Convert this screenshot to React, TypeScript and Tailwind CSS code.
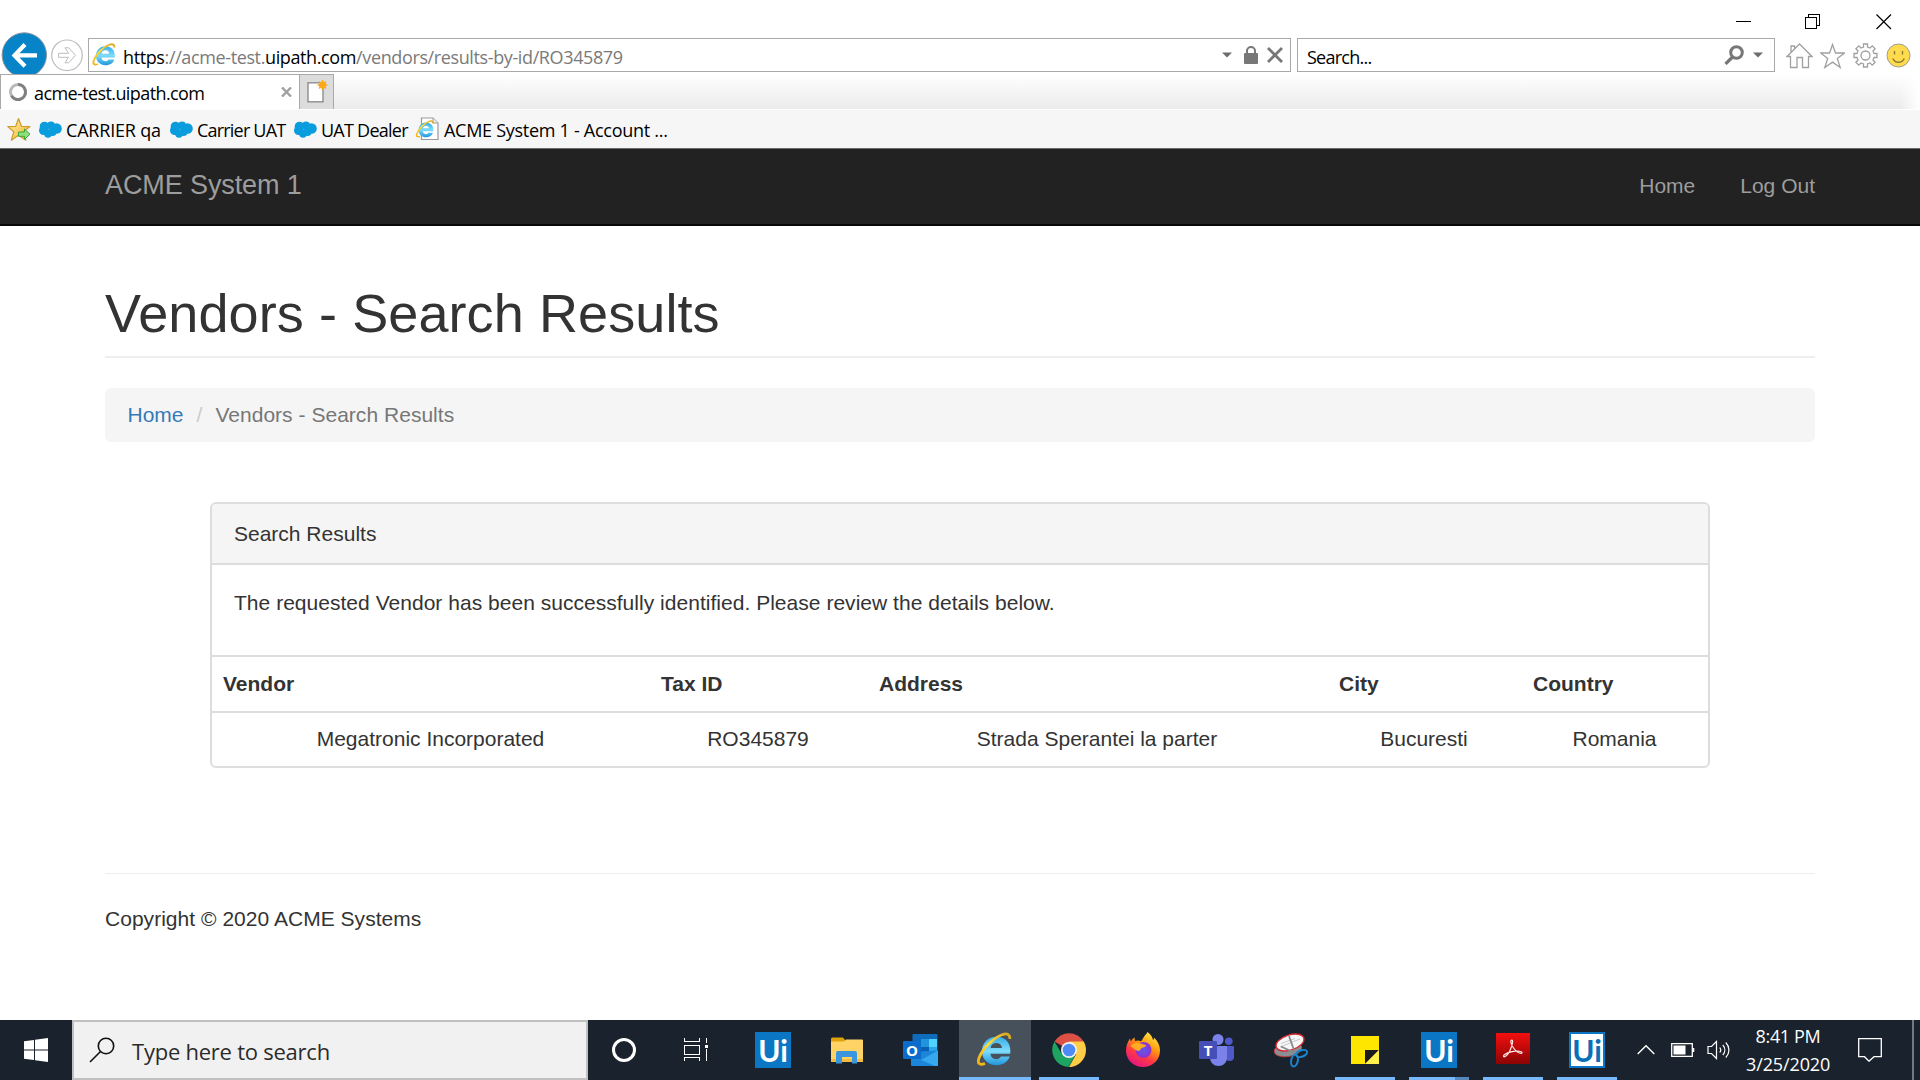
import type { ReactNode } from "react";

/* ---------- browser icons ---------- */

function IEGlyph({ id }: { id: string }) {
  return (
    <>
      <defs>
        <linearGradient id={`${id}-b`} x1="0" y1="0" x2="0" y2="1">
          <stop offset="0" stopColor="#35aeea" />
          <stop offset="0.5" stopColor="#7fdcfb" />
          <stop offset="1" stopColor="#1f97dc" />
        </linearGradient>
        <linearGradient id={`${id}-g`} x1="1" y1="0" x2="0" y2="1">
          <stop offset="0" stopColor="#d9a521" />
          <stop offset="0.5" stopColor="#ffdb3a" />
          <stop offset="1" stopColor="#f2b20f" />
        </linearGradient>
      </defs>
      <path
        d="M35 22.8H15.2c.3 3.500 2.500 5.400 5.700 5.400 2.300 0 4-.9 4.900-2.600H34.500C32.800 31 28 34.200 21.500 34.200 13 34.200 6.800 28.500 6.800 20.200S13 5.800 21.200 5.800C29.800 5.800 35.200 11.500 35.200 20zM15.400 17h11.400c-.4-3.200-2.500-5-5.600-5s-5.300 1.800-5.800 5z"
        fill={`url(#${id}-b)`}
      />
      <path
        d="M34.600 7.800C35 3.500 32 2 27.500 3.500 19 6.300 8 16.500 4 26.500c-2.200 5.500-.3 8.300 5.800 6"
        fill="none"
        stroke={`url(#${id}-g)`}
        strokeWidth="2.800"
      />
    </>
  );
}

function SmallIE({ id }: { id: string }) {
  return (
    <svg className="h-[24px] w-[24px] shrink-0" viewBox="1 1 36 36">
      <IEGlyph id={id} />
    </svg>
  );
}

function BackForward() {
  return (
    <svg className="h-[44px] w-[88px] shrink-0" viewBox="0 0 88 44">
      <circle cx="24.300" cy="25" r="22.200" fill="#0784c8" stroke="#8d9499" strokeWidth="1" />
      <path d="M37 25.400H16M25 14.500L14.500 25.400L25 36.300" fill="none" stroke="#fff" strokeWidth="4.200" />
      <circle cx="67" cy="25.300" r="15.300" fill="#fff" stroke="#bdbdbd" strokeWidth="1.200" />
      <path d="M58.500 23.300h10l-3.500-5.500h3.700l6.800 7.500-6.800 7.500H65l3.500-5.500h-10z" fill="none" stroke="#bdbdbd" strokeWidth="1" />
    </svg>
  );
}

function Caret() {
  return (
    <svg className="h-[6px] w-[10px] shrink-0" viewBox="0 0 10 6">
      <path d="M0 .5h10L5 5.500z" fill="#6d6d6d" />
    </svg>
  );
}

function LockIcon() {
  return (
    <svg className="h-[18px] w-[14px] shrink-0" viewBox="0 0 14 18">
      <rect x="0" y="7" width="14" height="11" rx="1" fill="#777" />
      <path d="M3 8V5a4 4 0 0 1 8 0v3" fill="none" stroke="#777" strokeWidth="2" />
    </svg>
  );
}

function StopIcon() {
  return (
    <svg className="h-[16px] w-[16px] shrink-0" viewBox="0 0 16 16">
      <path d="M1 1L15 15M15 1L1 15" stroke="#777" strokeWidth="2.800" />
    </svg>
  );
}

function ToolbarSearchIcon() {
  return (
    <svg className="h-[20px] w-[20px] shrink-0" viewBox="0 0 20 20">
      <circle cx="12.500" cy="7.500" r="5.800" fill="none" stroke="#777" strokeWidth="3" />
      <path d="M8.500 12L1.500 19" stroke="#777" strokeWidth="3.200" />
    </svg>
  );
}

function ToolbarIcons() {
  return (
    <div className="mt-[13px] ml-[11px] flex shrink-0 gap-[8px]">
      <svg className="h-[26px] w-[27px]" viewBox="0 0 27 26" fill="none" stroke="#a0a0a0" strokeWidth="1.300">
        <path d="M1 13.500L13.500 1L26 13.500H22.500V24.500H16.500V14.500H11V24.500H4.500V13.500zM5 9V3h3.500v2.500" />
      </svg>
      <svg className="-ml-px h-[26px] w-[25px]" viewBox="0 0 25 26" fill="none" stroke="#a0a0a0" strokeWidth="1.300">
        <path d="M12.500 1.500l3 8.500h9l-7.200 5.500 2.900 9-7.700-5.400-7.700 5.400 2.900-9L.6 10h9z" />
      </svg>
      <svg className="h-[26px] w-[25px]" viewBox="0 0 25 26" fill="none" stroke="#a0a0a0" strokeWidth="1.300">
        <path d="M10.500 1h4v3l2.500 1 2.200-2.200 2.900 2.900L20 8l1 2.500h3v4h-3L20 17l2.100 2.300-2.900 2.900L17 20l-2.500 1v3h-4v-3L8 20l-2.200 2.200-2.900-2.900L5 17l-1-2.500H1v-4h3L5 8 2.900 5.700l2.900-2.900L8 5l2.500-1z" />
        <circle cx="12.500" cy="12.500" r="4.500" />
      </svg>
      <svg className="h-[26px] w-[25px]" viewBox="0 0 25 26">
        <circle cx="12.500" cy="12.500" r="11.500" fill="#ffdb4d" stroke="#9d9d9d" strokeWidth="1" />
        <path d="M8.500 8v3.500M16.500 8v3.500" stroke="#8a7a30" strokeWidth="1.400" />
        <path d="M6.800 15.500c2.500 5 9 5 11.500 0" fill="none" stroke="#8a7a30" strokeWidth="1.500" />
      </svg>
    </div>
  );
}

function WindowControls() {
  return (
    <div className="flex h-[30px] justify-end gap-[54px] pt-[14px] pr-[28px]">
      <svg className="h-[16px] w-[16px]" viewBox="0 0 16 16" shapeRendering="crispEdges">
        <path d="M0 7.500h15" stroke="#000" />
      </svg>
      <svg className="mr-px -ml-px h-[16px] w-[16px]" viewBox="0 0 16 16" fill="none" stroke="#000" shapeRendering="crispEdges">
        <path d="M.5 3.500h11v11H.5zM3.500 3V.5h11v11H12" />
      </svg>
      <svg className="h-[16px] w-[16px]" viewBox="0 0 16 16">
        <path d="M.5 .5l14.500 14.500M15 .5L.5 15" stroke="#000" strokeWidth="1.200" />
      </svg>
    </div>
  );
}

function Cloud() {
  return (
    <svg className="h-[17px] w-[23px] shrink-0" viewBox="0 0 23 17">
      <g fill="#0a9ddd">
        <circle cx="5.500" cy="5.500" r="4.800" />
        <circle cx="4.500" cy="9.500" r="4.500" />
        <circle cx="12" cy="4.500" r="4" />
        <circle cx="17.500" cy="7.500" r="5.300" />
        <circle cx="9" cy="12.500" r="4.200" />
        <circle cx="13.500" cy="11" r="4" />
      </g>
    </svg>
  );
}

function FavoriteStar() {
  return (
    <svg className="h-[25px] w-[25px] shrink-0" viewBox="0 0 25 25">
      <defs>
        <linearGradient id="favstar" x1="0" y1="0" x2="1" y2="1">
          <stop offset="0" stopColor="#fff1a8" />
          <stop offset="1" stopColor="#f3b32b" />
        </linearGradient>
      </defs>
      <path
        d="M11.500 1.500l3 7.800 8.500.3-6.700 5.200 2.600 8.400-7.400-4.900-7.200 4.900 2.500-8.400L.8 9.600l8-.3z"
        fill="url(#favstar)"
        stroke="#cf9a2c"
        strokeWidth="1.200"
        strokeLinejoin="round"
      />
      <path d="M11.500 15h6v-3l5.500 5.200-5.500 5.200v-3.100h-6z" fill="#8fe07a" stroke="#3aa83c" strokeWidth="1" />
    </svg>
  );
}

function PageIE() {
  return (
    <svg className="h-[24px] w-[24px] shrink-0" viewBox="0 0 24 24">
      <path d="M5.500 1h11.500l5 5v16.500h-16.500z" fill="#fff" stroke="#9a9a9a" strokeWidth="1.200" />
      <path d="M17 1v5h5" fill="#eee" stroke="#9a9a9a" />
      <g transform="translate(-1 2.500) scale(.52)">
        <IEGlyph id="pg" />
      </g>
    </svg>
  );
}

/* ---------- browser chrome ---------- */

function AddressRow() {
  return (
    <div className="flex h-[44px] overflow-hidden">
      <BackForward />
      <div className="mt-[8px] flex h-[34px] w-[1203px] shrink-0 items-center border border-[#a9a9a9] bg-white pl-[3px]">
        <SmallIE id="addr" />
        <span className="mt-[3px] ml-[7px] flex-1 text-[18px] leading-[30px] tracking-[-0.38px] whitespace-nowrap text-[#7a7a7a]">
          <span className="text-black">https</span>://acme-test.<span className="text-black">uipath.com</span>
          /vendors/results-by-id/RO345879
        </span>
        <div className="flex items-center gap-[10px] pr-[7px]">
          <Caret />
          <div className="ml-[2px] flex items-center gap-[9px]">
            <LockIcon />
            <StopIcon />
          </div>
        </div>
      </div>
      <div className="mt-[8px] ml-[6px] flex h-[34px] w-[478px] shrink-0 items-center border border-[#a9a9a9] bg-white pr-[11px] pl-[9px]">
        <span className="mt-[3px] flex-1 text-[18px] leading-[30px] tracking-[-0.75px] text-black">Search...</span>
        <div className="flex items-center gap-[9px]">
          <ToolbarSearchIcon />
          <Caret />
        </div>
      </div>
      <ToolbarIcons />
    </div>
  );
}

function TabRow() {
  return (
    <div className="flex h-[35px] bg-gradient-to-b from-white to-[#ebebeb]">
      <div className="flex w-[300px] items-center border-t border-r border-l border-[#a9a9a9] bg-white pr-[7px] pl-[7px]">
        <svg className="h-[20px] w-[20px] shrink-0" viewBox="0 0 20 20">
          <circle cx="10" cy="10" r="7.500" fill="none" stroke="#b9b9b9" strokeWidth="3" />
          <path d="M10 2.500a7.500 7.500 0 1 1-6.500 11.200" fill="none" stroke="#808080" strokeWidth="3" />
        </svg>
        <span className="mt-[2px] ml-[6px] flex-1 text-[18px] leading-[32px] tracking-[-0.6px] text-black">
          acme-test.uipath.com
        </span>
        <svg className="h-[10px] w-[11px] shrink-0" viewBox="0 0 11 10">
          <path d="M1 .5l9 9M10 .5l-9 9" stroke="#a0a0a0" strokeWidth="2.400" />
        </svg>
      </div>
      <div className="flex w-[34px] justify-center border-t border-r border-[#a9a9a9] bg-[#dcdcdc]">
        <svg className="mt-[5px] h-[24px] w-[22px]" viewBox="0 0 22 24">
          <rect x="2" y="2.800" width="15" height="19" fill="#fff" stroke="#8d8d8d" strokeWidth="1.400" />
          <circle cx="16.500" cy="5" r="3.600" fill="#fba919" />
          <path d="M16.500 0v10M11.500 5h10M13 1.500l7 7M20 1.500l-7 7" stroke="#fba919" strokeWidth="1.300" />
        </svg>
      </div>
      <div className="flex-1" />
      <div className="w-[20px] bg-gradient-to-r from-transparent to-white" />
    </div>
  );
}

function FavoritesBar() {
  return (
    <div className="mt-px flex h-[39px] items-center border-b border-[#6b6b6b] bg-[#f6f6f6] pl-[7px] text-[18px] leading-[36px] whitespace-nowrap text-black">
      <FavoriteStar />
      <div className="ml-[7px] flex w-[131px] items-center gap-[4px]">
        <Cloud />
        <span className="mt-[2px] tracking-[-0.2px]">CARRIER qa</span>
      </div>
      <div className="flex w-[124px] items-center gap-[4px]">
        <Cloud />
        <span className="mt-[2px] tracking-[-0.8px]">Carrier UAT</span>
      </div>
      <div className="flex w-[122px] items-center gap-[4px]">
        <Cloud />
        <span className="mt-[2px] tracking-[-0.75px]">UAT Dealer</span>
      </div>
      <div className="flex items-center gap-[4px]">
        <PageIE />
        <span className="mt-[2px] tracking-[-0.28px]">ACME System 1 - Account ...</span>
      </div>
    </div>
  );
}

/* ---------- page ---------- */

function Page() {
  return (
    <main className="h-[871px] overflow-hidden bg-white font-['Liberation_Sans',Arial,sans-serif] text-[21px] leading-[30px] text-[#333]">
      <nav className="flex h-[77px] items-center justify-between border-b-2 border-[#080808] bg-[#222] px-[105px] pb-[2px] text-[#9d9d9d]">
        <span className="mb-px text-[27px] tracking-[-0.1px]">ACME System 1</span>
        <div className="flex gap-[45px]">
          <span>Home</span>
          <span>Log Out</span>
        </div>
      </nav>
      <div className="mx-auto w-[1710px]">
        <h1 className="mt-[57px] border-b-2 border-[#eee] pb-[13px] text-[54px] leading-[60px] tracking-[0.1px]">
          Vendors - Search Results
        </h1>
        <div className="mt-[30px] flex h-[54px] items-center rounded-[6px] bg-[#f5f5f5] px-[22.5px]">
          <span className="text-[#337ab7]">Home</span>
          <span className="mx-[13px] text-[#ccc]">/</span>
          <span className="tracking-[0.03px] text-[#777]">Vendors - Search Results</span>
        </div>
        <section className="mx-auto mt-[60px] w-[1500px] overflow-hidden rounded-[6px] border-2 border-[#ddd]">
          <div className="flex h-[61px] items-center border-b-2 border-[#ddd] bg-[#f5f5f5] px-[22px]">
            Search Results
          </div>
          <div className="h-[90px] px-[22px] pt-[23px] tracking-[0.027px]">
            The requested Vendor has been successfully identified. Please review the details below.
          </div>
          <table className="w-full table-fixed border-collapse border-t-2 border-[#ddd]">
            <colgroup>
              <col className="w-[437px]" />
              <col className="w-[218px]" />
              <col className="w-[460px]" />
              <col className="w-[194px]" />
              <col />
            </colgroup>
            <thead>
              <tr className="h-[56px] border-b-2 border-[#ddd]">
                {["Vendor", "Tax ID", "Address", "City", "Country"].map((h) => (
                  <th key={h} className="px-[12px] text-left font-bold first:pl-[11px]">
                    {h}
                  </th>
                ))}
              </tr>
            </thead>
            <tbody>
              <tr className="h-[54px] text-center">
                {["Megatronic Incorporated", "RO345879", "Strada Sperantei la parter", "Bucuresti", "Romania"].map((c) => (
                  <td key={c} className="px-[12px] pb-[2px]">
                    {c}
                  </td>
                ))}
              </tr>
            </tbody>
          </table>
        </section>
        <hr className="mt-[105px] border-t border-[#eee]" />
        <p className="mt-[30px] tracking-[0.03px]">Copyright © 2020 ACME Systems</p>
      </div>
    </main>
  );
}

/* ---------- taskbar ---------- */

function Svg36({ children }: { children: ReactNode }) {
  return (
    <svg className="h-[36px] w-[36px]" viewBox="0 0 36 36">
      {children}
    </svg>
  );
}

function UiTile({ inverted = false }: { inverted?: boolean }) {
  return (
    <div
      className={
        "flex h-[36px] w-[36px] items-center justify-center font-['Lato',sans-serif] text-[30px] leading-[32px] font-bold " +
        (inverted ? "border-2 border-[#0b76c4] bg-white text-[#0b6fb8]" : "bg-[#0b76c4] text-white")
      }
    >
      Ui
    </div>
  );
}

function FolderIcon() {
  return (
    <Svg36>
      <path d="M2 7a1.500 1.500 0 0 1 1.500-1.500H14l2 2.500v3H2z" fill="#e0a30c" />
      <path d="M2 9.500h13l2-2h16a1 1 0 0 1 1 1V30H2z" fill="#ffd365" />
      <path d="M2 27h32v3H2z" fill="#f2bd3e" />
      <path d="M7 31.500V21a2 2 0 0 1 2-2h17a2 2 0 0 1 2 2v10.500h-5V25H13v6.500z" fill="#3b96df" />
    </Svg36>
  );
}

function OutlookIcon() {
  return (
    <Svg36>
      <rect x="9.500" y="2" width="25" height="20" rx="1" fill="#0f6cbd" />
      <rect x="18" y="7" width="8" height="8" fill="#1f95de" />
      <rect x="26" y="7" width="8" height="8" fill="#50d3ff" />
      <rect x="26" y="15" width="8" height="7" fill="#2ba6e8" />
      <rect x="18" y="15" width="8" height="8" fill="#0a61b4" />
      <path d="M8 20l27-1.500V33a1 1 0 0 1-1 1H9a1 1 0 0 1-1-1z" fill="#1b86d8" />
      <path d="M35 18.500L18 28l14 6h2a1 1 0 0 0 1-1z" fill="#35a8ee" />
      <rect x="0" y="9" width="18" height="18" rx="1" fill="#0c6ccb" />
      <text x="9" y="23.500" textAnchor="middle" fontFamily="Open Sans" fontWeight="700" fontSize="15" fill="#fff">
        O
      </text>
    </Svg36>
  );
}

function ChromeIcon() {
  return (
    <Svg36>
      <path d="M18 18L3.500 9.500A17 17 0 0 1 32.700 9.500z" fill="#dd5144" />
      <path d="M18 9.500h14.700A17 17 0 0 1 18 35l7.200-13z" fill="#ffcd46" />
      <path d="M3.500 9.500A17 17 0 0 0 17.500 35l7.200-12.500L18 18l-7.500 3.500z" fill="#1da462" />
      <circle cx="18" cy="18" r="8" fill="#f1f1f1" />
      <circle cx="18" cy="18" r="6.300" fill="#4c8bf5" />
    </Svg36>
  );
}

function FirefoxIcon() {
  return (
    <Svg36>
      <defs>
        <linearGradient id="ff-o" x1=".85" y1="0" x2=".3" y2="1">
          <stop offset="0" stopColor="#fff44f" />
          <stop offset=".4" stopColor="#ff980e" />
          <stop offset=".7" stopColor="#ff3647" />
          <stop offset="1" stopColor="#e31587" />
        </linearGradient>
        <radialGradient id="ff-p">
          <stop offset="0" stopColor="#5b5bf0" />
          <stop offset="1" stopColor="#9331c8" />
        </radialGradient>
      </defs>
      <path
        d="M22.500 0c3.500 2.500 5 5.500 5.500 8 1-.5 1-1.500 1-2.500C33 9 35 14 35 18.500 35 28 27.500 35 18 35S1 28 1 18.500C1 14 2.500 10 5 6.500l.8 3C7 7.500 8 6.200 9.500 5.500L10 9c1.500-.6 4.500-.8 6 .2 1.500-1 2-3.500 3.500-5.200 1-1.200 2.500-2.500 3-4z"
        fill="url(#ff-o)"
      />
      <circle cx="18.500" cy="18" r="8" fill="url(#ff-p)" />
      <path d="M5.500 14c3-3 7-4 10-2.500l5 1.500c1.500.5 0 2-2.500 2.500-2 .5-3 2-3.500 3.500-3 0-5-2-9-5z" fill="#ffab22" />
    </Svg36>
  );
}

function TeamsIcon() {
  return (
    <Svg36>
      <circle cx="19" cy="7.500" r="5.500" fill="#7b83eb" />
      <circle cx="29.800" cy="9.300" r="3.800" fill="#5059c9" />
      <path d="M26 14h8a1 1 0 0 1 1 1v10c0 3-2.500 4-4.500 4S26 28 26 26z" fill="#5059c9" />
      <path d="M11 14h16a1 1 0 0 1 1 1v10c0 6-4 9-8.500 9S11 31 11 25z" fill="#7b83eb" />
      <rect x="0" y="9" width="18" height="18" rx="1" fill="#464eb8" />
      <text x="9" y="23.500" textAnchor="middle" fontFamily="Open Sans" fontWeight="700" fontSize="15" fill="#fff">
        T
      </text>
    </Svg36>
  );
}

function SnipIcon() {
  return (
    <Svg36>
      <ellipse cx="15" cy="17.500" rx="14" ry="7" transform="rotate(-10 15 17.500)" fill="#8b8f94" stroke="#c33" strokeWidth=".8" />
      <ellipse cx="17" cy="10.500" rx="14.500" ry="7.500" transform="rotate(-18 17 10.500)" fill="#f7f7f7" stroke="#d8262c" strokeWidth="1.400" />
      <path d="M7 15l20-8M8 11.500l14-5" stroke="#c8c8c8" strokeWidth="1" />
      <path d="M16 4l6 17M8 14.500l14 6.500" stroke="#858b91" strokeWidth="1.800" />
      <ellipse cx="28.500" cy="21.500" rx="5.800" ry="3.200" transform="rotate(-20 28.500 21.500)" fill="none" stroke="#1b86cf" strokeWidth="2" />
      <ellipse cx="21.500" cy="28.500" rx="3.300" ry="6" transform="rotate(12 21.500 28.500)" fill="none" stroke="#1b86cf" strokeWidth="2" />
    </Svg36>
  );
}

function StickyIcon() {
  return (
    <Svg36>
      <path d="M4 4h28v28H4z" fill="#ffe600" />
      <path d="M18 18h14L18 32z" fill="#1b1b1b" />
      <path d="M32 18v14H18z" fill="#fff04d" />
    </Svg36>
  );
}

function AcrobatIcon() {
  return (
    <Svg36>
      <defs>
        <linearGradient id="acr" x1="0" y1="0" x2="0" y2="1">
          <stop offset="0" stopColor="#f50f0f" />
          <stop offset="1" stopColor="#8b0404" />
        </linearGradient>
      </defs>
      <rect x="1" y="1" width="34" height="31" fill="url(#acr)" />
      <path
        d="M17 8c-2.200 0-1 4.500 1.500 8 2.300 3.300 6 5.800 8 5.300 2-.8-1-2.800-6.500-2.200-5.500.5-11.500 3.200-11.500 5 0 2 3.500.2 6-4.600C17 14.500 18.500 8 17 8z"
        fill="none"
        stroke="#ffe9e9"
        strokeWidth="1.200"
      />
    </Svg36>
  );
}

function IETaskIcon() {
  return (
    <Svg36>
      <g transform="translate(-1.800 -1)">
        <IEGlyph id="task" />
      </g>
    </Svg36>
  );
}

type TaskState = "idle" | "open" | "active" | "stacked";

const tasks: { name: string; icon: ReactNode; state: TaskState }[] = [
  { name: "uipath", icon: <UiTile />, state: "idle" },
  { name: "explorer", icon: <FolderIcon />, state: "idle" },
  { name: "outlook", icon: <OutlookIcon />, state: "idle" },
  { name: "ie", icon: <IETaskIcon />, state: "active" },
  { name: "chrome", icon: <ChromeIcon />, state: "open" },
  { name: "firefox", icon: <FirefoxIcon />, state: "idle" },
  { name: "teams", icon: <TeamsIcon />, state: "idle" },
  { name: "snip", icon: <SnipIcon />, state: "idle" },
  { name: "notes", icon: <StickyIcon />, state: "open" },
  { name: "studio", icon: <UiTile />, state: "stacked" },
  { name: "acrobat", icon: <AcrobatIcon />, state: "open" },
  { name: "robot", icon: <UiTile inverted />, state: "open" },
];

function TaskButton({ icon, state }: { icon: ReactNode; state: TaskState }) {
  return (
    <div className={"flex h-[60px] w-[72px] flex-col items-center justify-between pt-[12px] " + (state === "active" ? "bg-[#47515b]" : "")}>
      {icon}
      {state === "active" && <div className="h-[3px] w-[72px] bg-[#76b9ff]" />}
      {state === "open" && <div className="h-[3px] w-[60px] bg-[#76b9ff]" />}
      {state === "stacked" && (
        <div className="flex h-[3px] w-[60px]">
          <div className="w-[46px] bg-[#76b9ff]" />
          <div className="w-[14px] bg-[#5688bd]" />
        </div>
      )}
      {state === "idle" && <div className="h-[3px]" />}
    </div>
  );
}

function Tray() {
  return (
    <div className="flex h-[60px] items-center text-white">
      <svg className="ml-[14px] h-[12px] w-[18px]" viewBox="0 0 18 12">
        <path d="M.7 10L9 1.700L17.300 10" fill="none" stroke="#fff" strokeWidth="1.400" />
      </svg>
      <svg className="ml-[16px] h-[14px] w-[24px]" viewBox="0 0 24 14">
        <path d="M.7.700h20.600v12.600H.7z" fill="none" stroke="#fff" strokeWidth="1.300" />
        <path d="M2.500 2.500h12v9h-12zM21.500 5h1.800v4h-1.800z" fill="#fff" />
      </svg>
      <svg className="ml-[12px] h-[20px] w-[24px]" viewBox="0 0 24 20" fill="none" stroke="#fff" strokeWidth="1.200">
        <path d="M1 6.500h3.500l5-5v17l-5-5H1z" />
        <path d="M12.800 7.500c1.200 1.500 1.200 3.500 0 5M15.800 5c2.700 3 2.700 7 0 10M18.800 2.500c4.200 4.500 4.200 10.500 0 15" />
      </svg>
      <div className="ml-[15px] w-[84px] text-center text-[18px] leading-[28px] whitespace-nowrap">
        <div className="tracking-[-0.35px]">8:41 PM</div>
        <div className="tracking-[-0.12px]">3/25/2020</div>
      </div>
      <svg className="ml-[28px] h-[24px] w-[24px]" viewBox="0 0 24 24">
        <path d="M.7.700h22.600v18H16L11 23.200L6.500 18.700H.7z" fill="none" stroke="#fff" strokeWidth="1.300" />
      </svg>
      <div className="ml-[30px] h-[60px] w-[2px] bg-[#727980]" />
    </div>
  );
}

function Taskbar() {
  return (
    <footer className="flex h-[60px] bg-[#1a232d]">
      <div className="flex w-[72px] items-center justify-center">
        <svg className="h-[24px] w-[24px]" viewBox="0 0 24 24" fill="#fff">
          <path d="M0 3.300l10-1.400v9.600H0zM11 1.700L24 0v11.500H11zM0 12.500h10v9.600L0 20.700zM11 12.500h13V24l-13-1.700z" />
        </svg>
      </div>
      <div className="flex w-[516px] items-center border-2 border-[#c0c0c0] bg-[#f1f1f1] pl-[15px]">
        <svg className="h-[26px] w-[26px]" viewBox="0 0 26 26">
          <circle cx="17" cy="9" r="7.700" fill="none" stroke="#111" strokeWidth="1.600" />
          <path d="M11.500 14.500L1 25" stroke="#111" strokeWidth="1.600" />
        </svg>
        <span className="mt-[2px] ml-[17px] text-[22px] leading-[30px] tracking-[-0.24px] text-[#2b2b2b]">
          Type here to search
        </span>
      </div>
      <div className="flex w-[72px] items-center justify-center">
        <div className="h-[24px] w-[24px] rounded-full border-[3px] border-white" />
      </div>
      <div className="mr-[5px] flex w-[72px] items-center justify-center">
        <svg className="h-[24px] w-[24px]" viewBox="0 0 24 24" fill="none" stroke="#fff" shapeRendering="crispEdges">
          <path d="M.5 0v3.500h15V0M.5 23v-3.500h15V23M.5 7.500h15v9H.5zM22.500 0v5M22.500 11v12" />
          <path d="M21 7h3v3h-3z" fill="#fff" stroke="none" />
        </svg>
      </div>
      <div className="flex gap-[2px]">
        {tasks.map((t) => (
          <TaskButton key={t.name} icon={t.icon} state={t.state} />
        ))}
      </div>
      <Tray />
    </footer>
  );
}

export default function App() {
  return (
    <div className="h-[1080px] w-[1920px] overflow-hidden bg-white font-['Open_Sans','Noto_Sans',sans-serif]">
      <header>
        <WindowControls />
        <AddressRow />
        <TabRow />
        <FavoritesBar />
      </header>
      <Page />
      <Taskbar />
    </div>
  );
}
